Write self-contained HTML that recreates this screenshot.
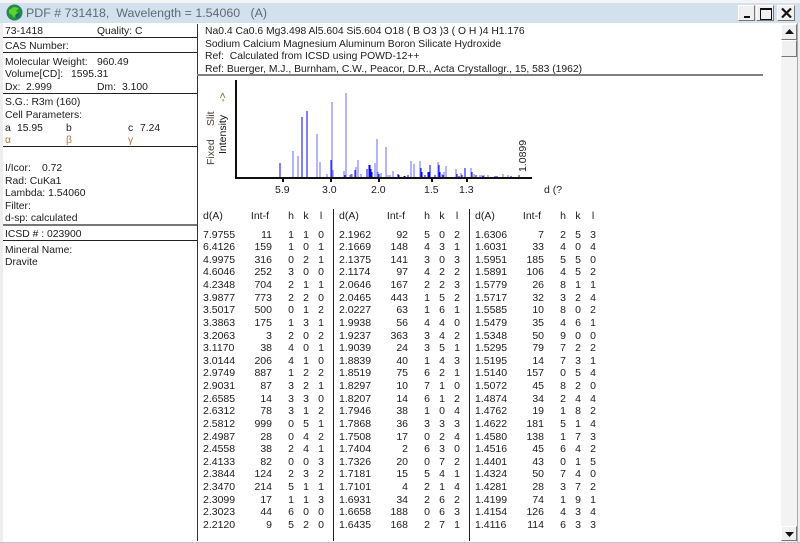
<!DOCTYPE html>
<html>
<head>
<meta charset="utf-8">
<title>PDF # 731418</title>
<style>
html,body{margin:0;padding:0;background:#fff}
#w{position:relative;width:800px;height:543px;overflow:hidden;background:#fff;font-family:"Liberation Sans",sans-serif;font-size:10.5px;color:#1c1c1c;filter:blur(.25px)}
.a{position:absolute;white-space:pre;line-height:13px;font-size:10.35px}
.h{position:absolute;background:#222;height:1px}
.v{position:absolute;background:#222;width:1px}
.g{color:#b5763a}
.col{position:absolute;top:228.5px;width:130px}
.col div{display:flex;height:12.63px;line-height:13px}
.col span:nth-child(1),.hd span:nth-child(1){width:34px}
.col span:nth-child(2),.hd span:nth-child(2){width:35px;text-align:right}
.col span:nth-child(3),.hd span:nth-child(3){width:14px;margin-left:12px;text-align:center}
.col span:nth-child(4),.hd span:nth-child(4){width:14px;margin-left:1px;text-align:center}
.col span:nth-child(5),.hd span:nth-child(5){width:14px;margin-left:1px;text-align:center}
.hd{position:absolute;top:210px;display:flex;line-height:13px;width:130px}
.hd span:nth-child(2){text-align:right;width:32px}
.hd span:nth-child(3){margin-left:15px}
.btn{position:absolute;background:#f0f0f0;border:1px solid;border-color:#fff #777 #777 #fff;box-sizing:border-box}
.rot{position:absolute;white-space:pre;transform-origin:0 0;transform:rotate(-90deg);line-height:13px}
</style>
</head>
<body>
<div id="w">
<div style="position:absolute;left:0;top:0;width:800px;height:3px;background:#f4f4f4"></div>
<div style="position:absolute;left:0;top:3px;width:800px;height:20px;background:#d3e1ee"></div>
<div style="position:absolute;left:0;top:23px;width:3px;height:520px;background:#eceef0"></div>
<div style="position:absolute;left:797px;top:23px;width:3px;height:520px;background:#eceef0"></div>
<div style="position:absolute;left:797px;top:23px;width:1px;height:520px;background:#aaa"></div>
<div style="position:absolute;left:0;top:542px;width:800px;height:1px;background:#c4c4c4"></div>

<svg style="position:absolute;left:6px;top:4px" width="17" height="17" viewBox="0 0 17 17">
<circle cx="8.5" cy="8.5" r="8" fill="#2f7d55"/>
<circle cx="8.5" cy="8.5" r="6.3" fill="#1c9a3c"/>
<path d="M3 6 L8 3 L13 4 L10 7 L12 9 L9 11 L8 14 L6 11 L3 9Z" fill="#5fd02f"/>
<path d="M10 10 L14 9 L13 13 L10 14Z" fill="#0d6e6a"/>
</svg>
<div class="a" style="left:26px;top:6px;font-size:12.4px;line-height:15px;color:#5f6a72">PDF # 731418,  Wavelength = 1.54060   (A)</div>

<div class="btn" style="left:738px;top:5px;width:17px;height:16px"><div style="position:absolute;left:5px;top:10px;width:6px;height:2px;background:#111"></div></div>
<div class="btn" style="left:756px;top:5px;width:18px;height:16px"><div style="position:absolute;left:3px;top:2px;width:10px;height:9px;border:1px solid #111;border-top-width:2px;box-sizing:content-box"></div></div>
<div class="btn" style="left:777px;top:5px;width:18px;height:16px">
<svg style="position:absolute;left:3px;top:2px" width="11" height="10" viewBox="0 0 11 10"><path d="M1 0.5 L10 9.5 M10 0.5 L1 9.5" stroke="#111" stroke-width="2.2" fill="none"/></svg></div>

<div style="position:absolute;left:781px;top:24px;width:16px;height:518px;background:#f3f3f3"></div>
<div class="btn" style="left:781px;top:24px;width:16px;height:16px"><svg style="position:absolute;left:3px;top:4px" width="9" height="5"><path d="M4.5 0 L9 5 L0 5Z" fill="#111"/></svg></div>
<div class="btn" style="left:781px;top:40px;width:16px;height:17px"></div>
<div class="btn" style="left:781px;top:526px;width:16px;height:15px"><svg style="position:absolute;left:3px;top:5px" width="9" height="5"><path d="M0 0 L9 0 L4.5 5Z" fill="#111"/></svg></div>

<!-- left panel lines -->
<div class="v" style="left:197px;top:24px;height:517px;background:#333"></div>
<div class="h" style="left:3px;top:37px;width:194px"></div>
<div class="h" style="left:3px;top:52px;width:194px"></div>
<div class="h" style="left:3px;top:93px;width:194px"></div>
<div class="h" style="left:3px;top:146px;width:194px"></div>
<div class="h" style="left:3px;top:224px;width:194px;height:2px;background:#777"></div>
<div class="h" style="left:3px;top:240px;width:194px"></div>
<div class="h" style="left:197px;top:74px;width:566px;height:2px;background:#808080"></div>

<!-- left panel text -->
<div class="a" style="left:5px;top:25px">73-1418</div>
<div class="a" style="left:97px;top:25px">Quality: C</div>
<div class="a" style="left:5px;top:40px">CAS Number:</div>
<div class="a" style="left:5px;top:56px">Molecular Weight:</div>
<div class="a" style="left:97px;top:56px">960.49</div>
<div class="a" style="left:5px;top:68px">Volume[CD]:</div>
<div class="a" style="left:71px;top:68px">1595.31</div>
<div class="a" style="left:5px;top:81px">Dx:</div>
<div class="a" style="left:26px;top:81px">2.999</div>
<div class="a" style="left:97px;top:81px">Dm:</div>
<div class="a" style="left:122px;top:81px">3.100</div>
<div class="a" style="left:5px;top:96px">S.G.: R3m (160)</div>
<div class="a" style="left:5px;top:109px">Cell Parameters:</div>
<div class="a" style="left:5px;top:122px">a</div>
<div class="a" style="left:17px;top:122px">15.95</div>
<div class="a" style="left:66px;top:122px">b</div>
<div class="a" style="left:128px;top:122px">c</div>
<div class="a" style="left:140px;top:122px">7.24</div>
<div class="a g" style="left:5px;top:134px">α</div>
<div class="a g" style="left:66px;top:134px">β</div>
<div class="a g" style="left:128px;top:134px">γ</div>
<div class="a" style="left:5px;top:162px">I/Icor:</div>
<div class="a" style="left:42px;top:162px">0.72</div>
<div class="a" style="left:5px;top:175px">Rad: CuKa1</div>
<div class="a" style="left:5px;top:187px">Lambda: 1.54060</div>
<div class="a" style="left:5px;top:200px">Filter:</div>
<div class="a" style="left:5px;top:212px">d-sp: calculated</div>
<div class="a" style="left:5px;top:228px">ICSD # : 023900</div>
<div class="a" style="left:5px;top:244px">Mineral Name:</div>
<div class="a" style="left:5px;top:256px">Dravite</div>

<!-- top right text -->
<div class="a" style="left:205px;top:25px">Na0.4 Ca0.6 Mg3.498 Al5.604 Si5.604 O18 ( B O3 )3 ( O H )4 H1.176</div>
<div class="a" style="left:205px;top:38px">Sodium Calcium Magnesium Aluminum Boron Silicate Hydroxide</div>
<div class="a" style="left:205px;top:50px">Ref:  Calculated from ICSD using POWD-12++</div>
<div class="a" style="left:205px;top:63px">Ref: Buerger, M.J., Burnham, C.W., Peacor, D.R., Acta Crystallogr., 15, 583 (1962)</div>

<!-- chart -->
<svg style="position:absolute;left:200px;top:75px;overflow:visible" width="400" height="125" viewBox="200 75 400 125" shape-rendering="crispEdges">
<g stroke="#6a6aff" stroke-width="1">
<path d="M293 178V151M298 178V156M317 178V134M320 178V162M327 178V174M332 178V102M333 178V170M344 178V171M346 178V93M350 178V175M351 178V174M352 178V174M356 178V167M358 178V160M361 178V174M375 178V163M377 178V139M378 178V172M381 178V173M386 178V147M388 178V175M390 178V175M393 178V171M411 178V161M414 178V164M420 178V161M438 178V162M442 178V174M444 178V172M446 178V166M456 178V169M461 178V173M471 178V168M474 178V174M480 178V175M482 178V175M484 178V175M488 178V175M503 178V174M508 178V175"/>
</g>
<g stroke="#0000ff" stroke-width="1">
<path d="M280 178V163M302 178V117M307 178V111M331 178V160M345 178V175M355 178V170M367 178V169M369 178V165M370 178V165M371 178V169M372 178V172M379 178V174M398 178V174M399 178V175M404 178V176M405 178V176M408 178V175M421 178V168M422 178V172M425 178V175M428 178V172M429 178V172M430 178V165M435 178V175M439 178V165M440 178V172M443 178V175M457 178V174M459 178V176M462 178V175M465 178V168M472 178V172M476 178V175M483 178V176M495 178V176M497 178V176M511 178V176M519 178V175"/>
</g>
<g stroke="#111" stroke-width="2">
<path d="M236 80V179M235 178H532M283 178V182M331 178V182M379 178V182M432 178V182M467 178V182"/>
</g>
</svg>
<div class="a" style="left:275px;top:184px;font-size:10.5px">5.9</div>
<div class="a" style="left:322px;top:184px;font-size:10.5px">3.0</div>
<div class="a" style="left:371px;top:184px;font-size:10.5px">2.0</div>
<div class="a" style="left:424px;top:184px;font-size:10.5px">1.5</div>
<div class="a" style="left:459px;top:184px;font-size:10.5px">1.3</div>
<div class="a" style="left:544px;top:184px;font-size:10.5px">d (?</div>
<div class="rot" style="left:517px;top:172px">1.0899</div>
<div class="rot" style="left:205px;top:165px;color:#4a3f38">Fixed</div>
<div class="rot" style="left:205px;top:126px;color:#4a3f38">Slit</div>
<div class="rot" style="left:217px;top:154px;color:#111">Intensity</div>
<div class="rot" style="left:217px;top:102px;color:#8a5a30">-&gt;</div>

<!-- table -->
<div class="v" style="left:333px;top:209px;height:332px"></div>
<div class="v" style="left:469px;top:209px;height:332px"></div>
<div class="hd" style="left:203px"><span>d(A)</span><span>Int-f</span><span>h</span><span>k</span><span>l</span></div>
<div class="hd" style="left:339px"><span>d(A)</span><span>Int-f</span><span>h</span><span>k</span><span>l</span></div>
<div class="hd" style="left:475px"><span>d(A)</span><span>Int-f</span><span>h</span><span>k</span><span>l</span></div>

<div class="col" style="left:203px">
<div><span>7.9755</span><span>11</span><span>1</span><span>1</span><span>0</span></div>
<div><span>6.4126</span><span>159</span><span>1</span><span>0</span><span>1</span></div>
<div><span>4.9975</span><span>316</span><span>0</span><span>2</span><span>1</span></div>
<div><span>4.6046</span><span>252</span><span>3</span><span>0</span><span>0</span></div>
<div><span>4.2348</span><span>704</span><span>2</span><span>1</span><span>1</span></div>
<div><span>3.9877</span><span>773</span><span>2</span><span>2</span><span>0</span></div>
<div><span>3.5017</span><span>500</span><span>0</span><span>1</span><span>2</span></div>
<div><span>3.3863</span><span>175</span><span>1</span><span>3</span><span>1</span></div>
<div><span>3.2063</span><span>3</span><span>2</span><span>0</span><span>2</span></div>
<div><span>3.1170</span><span>38</span><span>4</span><span>0</span><span>1</span></div>
<div><span>3.0144</span><span>206</span><span>4</span><span>1</span><span>0</span></div>
<div><span>2.9749</span><span>887</span><span>1</span><span>2</span><span>2</span></div>
<div><span>2.9031</span><span>87</span><span>3</span><span>2</span><span>1</span></div>
<div><span>2.6585</span><span>14</span><span>3</span><span>3</span><span>0</span></div>
<div><span>2.6312</span><span>78</span><span>3</span><span>1</span><span>2</span></div>
<div><span>2.5812</span><span>999</span><span>0</span><span>5</span><span>1</span></div>
<div><span>2.4987</span><span>28</span><span>0</span><span>4</span><span>2</span></div>
<div><span>2.4558</span><span>38</span><span>2</span><span>4</span><span>1</span></div>
<div><span>2.4133</span><span>82</span><span>0</span><span>0</span><span>3</span></div>
<div><span>2.3844</span><span>124</span><span>2</span><span>3</span><span>2</span></div>
<div><span>2.3470</span><span>214</span><span>5</span><span>1</span><span>1</span></div>
<div><span>2.3099</span><span>17</span><span>1</span><span>1</span><span>3</span></div>
<div><span>2.3023</span><span>44</span><span>6</span><span>0</span><span>0</span></div>
<div><span>2.2120</span><span>9</span><span>5</span><span>2</span><span>0</span></div>
</div>

<div class="col" style="left:339px">
<div><span>2.1962</span><span>92</span><span>5</span><span>0</span><span>2</span></div>
<div><span>2.1669</span><span>148</span><span>4</span><span>3</span><span>1</span></div>
<div><span>2.1375</span><span>141</span><span>3</span><span>0</span><span>3</span></div>
<div><span>2.1174</span><span>97</span><span>4</span><span>2</span><span>2</span></div>
<div><span>2.0646</span><span>167</span><span>2</span><span>2</span><span>3</span></div>
<div><span>2.0465</span><span>443</span><span>1</span><span>5</span><span>2</span></div>
<div><span>2.0227</span><span>63</span><span>1</span><span>6</span><span>1</span></div>
<div><span>1.9938</span><span>56</span><span>4</span><span>4</span><span>0</span></div>
<div><span>1.9237</span><span>363</span><span>3</span><span>4</span><span>2</span></div>
<div><span>1.9039</span><span>24</span><span>3</span><span>5</span><span>1</span></div>
<div><span>1.8839</span><span>40</span><span>1</span><span>4</span><span>3</span></div>
<div><span>1.8519</span><span>75</span><span>6</span><span>2</span><span>1</span></div>
<div><span>1.8297</span><span>10</span><span>7</span><span>1</span><span>0</span></div>
<div><span>1.8207</span><span>14</span><span>6</span><span>1</span><span>2</span></div>
<div><span>1.7946</span><span>38</span><span>1</span><span>0</span><span>4</span></div>
<div><span>1.7868</span><span>36</span><span>3</span><span>3</span><span>3</span></div>
<div><span>1.7508</span><span>17</span><span>0</span><span>2</span><span>4</span></div>
<div><span>1.7404</span><span>2</span><span>6</span><span>3</span><span>0</span></div>
<div><span>1.7326</span><span>20</span><span>0</span><span>7</span><span>2</span></div>
<div><span>1.7181</span><span>15</span><span>5</span><span>4</span><span>1</span></div>
<div><span>1.7101</span><span>4</span><span>2</span><span>1</span><span>4</span></div>
<div><span>1.6931</span><span>34</span><span>2</span><span>6</span><span>2</span></div>
<div><span>1.6658</span><span>188</span><span>0</span><span>6</span><span>3</span></div>
<div><span>1.6435</span><span>168</span><span>2</span><span>7</span><span>1</span></div>
</div>

<div class="col" style="left:475px">
<div><span>1.6306</span><span>7</span><span>2</span><span>5</span><span>3</span></div>
<div><span>1.6031</span><span>33</span><span>4</span><span>0</span><span>4</span></div>
<div><span>1.5951</span><span>185</span><span>5</span><span>5</span><span>0</span></div>
<div><span>1.5891</span><span>106</span><span>4</span><span>5</span><span>2</span></div>
<div><span>1.5779</span><span>26</span><span>8</span><span>1</span><span>1</span></div>
<div><span>1.5717</span><span>32</span><span>3</span><span>2</span><span>4</span></div>
<div><span>1.5585</span><span>10</span><span>8</span><span>0</span><span>2</span></div>
<div><span>1.5479</span><span>35</span><span>4</span><span>6</span><span>1</span></div>
<div><span>1.5348</span><span>50</span><span>9</span><span>0</span><span>0</span></div>
<div><span>1.5295</span><span>79</span><span>7</span><span>2</span><span>2</span></div>
<div><span>1.5195</span><span>14</span><span>7</span><span>3</span><span>1</span></div>
<div><span>1.5140</span><span>157</span><span>0</span><span>5</span><span>4</span></div>
<div><span>1.5072</span><span>45</span><span>8</span><span>2</span><span>0</span></div>
<div><span>1.4874</span><span>34</span><span>2</span><span>4</span><span>4</span></div>
<div><span>1.4762</span><span>19</span><span>1</span><span>8</span><span>2</span></div>
<div><span>1.4622</span><span>181</span><span>5</span><span>1</span><span>4</span></div>
<div><span>1.4580</span><span>138</span><span>1</span><span>7</span><span>3</span></div>
<div><span>1.4516</span><span>45</span><span>6</span><span>4</span><span>2</span></div>
<div><span>1.4401</span><span>43</span><span>0</span><span>1</span><span>5</span></div>
<div><span>1.4324</span><span>50</span><span>7</span><span>4</span><span>0</span></div>
<div><span>1.4281</span><span>28</span><span>3</span><span>7</span><span>2</span></div>
<div><span>1.4199</span><span>74</span><span>1</span><span>9</span><span>1</span></div>
<div><span>1.4154</span><span>126</span><span>4</span><span>3</span><span>4</span></div>
<div><span>1.4116</span><span>114</span><span>6</span><span>3</span><span>3</span></div>
</div>
</div>
</body>
</html>
